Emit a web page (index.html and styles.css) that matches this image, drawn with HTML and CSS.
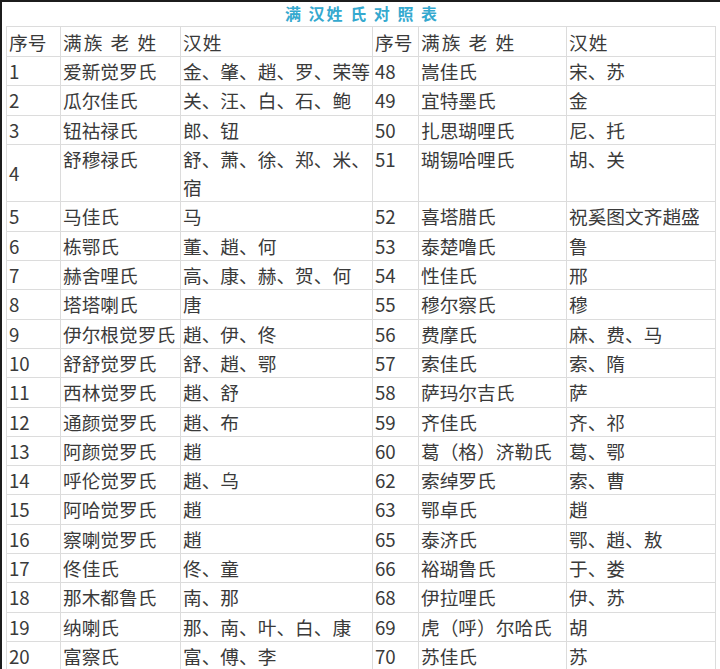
FILE: index.html
```html
<!DOCTYPE html>
<html lang="zh-CN">
<head>
<meta charset="utf-8">
<title>满汉姓氏对照表</title>
<link rel="stylesheet" href="styles.css">
</head>
<body>
<div class="frame">
  <h1 class="title">满 汉姓 氏 对 照 表</h1>
  <table class="grid">
    <colgroup>
      <col class="c-no"><col class="c-man"><col class="c-han">
      <col class="c-no2"><col class="c-man2"><col class="c-han2">
    </colgroup>
    <thead>
      <tr><th>序号</th><th class="h-man">满族 老 姓</th><th class="h-han">汉姓</th><th>序号</th><th class="h-man">满族 老 姓</th><th class="h-han">汉姓</th></tr>
    </thead>
    <tbody>
      <tr><td>1</td><td>爱新觉罗氏</td><td>金、肇、趙、罗、荣等</td><td>48</td><td>嵩佳氏</td><td>宋、苏</td></tr>
      <tr><td>2</td><td>瓜尔佳氏</td><td>关、汪、白、石、鲍</td><td>49</td><td>宜特墨氏</td><td>金</td></tr>
      <tr><td>3</td><td>钮祜禄氏</td><td>郎、钮</td><td>50</td><td>扎思瑚哩氏</td><td>尼、托</td></tr>
      <tr class="tall"><td class="mid">4</td><td>舒穆禄氏</td><td>舒、萧、徐、郑、米、宿</td><td>51</td><td>瑚锡哈哩氏</td><td>胡、关</td></tr>
      <tr><td>5</td><td>马佳氏</td><td>马</td><td>52</td><td>喜塔腊氏</td><td>祝奚图文齐趙盛</td></tr>
      <tr><td>6</td><td>栋鄂氏</td><td>董、趙、何</td><td>53</td><td>泰楚噜氏</td><td>鲁</td></tr>
      <tr><td>7</td><td>赫舍哩氏</td><td>高、康、赫、贺、何</td><td>54</td><td>性佳氏</td><td>邢</td></tr>
      <tr><td>8</td><td>塔塔喇氏</td><td>唐</td><td>55</td><td>穆尔察氏</td><td>穆</td></tr>
      <tr><td>9</td><td>伊尔根觉罗氏</td><td>趙、伊、佟</td><td>56</td><td>费摩氏</td><td>麻、费、马</td></tr>
      <tr><td>10</td><td>舒舒觉罗氏</td><td>舒、趙、鄂</td><td>57</td><td>索佳氏</td><td>索、隋</td></tr>
      <tr><td>11</td><td>西林觉罗氏</td><td>趙、舒</td><td>58</td><td>萨玛尔吉氏</td><td>萨</td></tr>
      <tr><td>12</td><td>通颜觉罗氏</td><td>趙、布</td><td>59</td><td>齐佳氏</td><td>齐、祁</td></tr>
      <tr><td>13</td><td>阿颜觉罗氏</td><td>趙</td><td>60</td><td>葛（格）济勒氏</td><td>葛、鄂</td></tr>
      <tr><td>14</td><td>呼伦觉罗氏</td><td>趙、乌</td><td>62</td><td>索绰罗氏</td><td>索、曹</td></tr>
      <tr><td>15</td><td>阿哈觉罗氏</td><td>趙</td><td>63</td><td>鄂卓氏</td><td>趙</td></tr>
      <tr><td>16</td><td>察喇觉罗氏</td><td>趙</td><td>65</td><td>泰济氏</td><td>鄂、趙、敖</td></tr>
      <tr><td>17</td><td>佟佳氏</td><td>佟、童</td><td>66</td><td>裕瑚鲁氏</td><td>于、娄</td></tr>
      <tr><td>18</td><td>那木都鲁氏</td><td>南、那</td><td>68</td><td>伊拉哩氏</td><td>伊、苏</td></tr>
      <tr><td>19</td><td>纳喇氏</td><td>那、南、叶、白、康</td><td>69</td><td>虎（呼）尔哈氏</td><td>胡</td></tr>
      <tr><td>20</td><td>富察氏</td><td>富、傅、李</td><td>70</td><td>苏佳氏</td><td>苏</td></tr>
    </tbody>
  </table>
</div>
</body>
</html>
```
FILE: styles.css
```css
html, body {
  margin: 0;
  padding: 0;
  background: #ffffff;
}
body {
  font-family: "Noto Sans CJK SC", "Noto Sans", sans-serif;
  color: #3a3a3a;
  overflow: hidden;
}
.frame {
  width: 720px;
  height: 669px;
  box-sizing: border-box;
  border-top: 2px solid #1c1c1c;
  border-left: 2px solid #1c1c1c;
  overflow: hidden;
}
.title {
  margin: 0;
  height: 24px;
  line-height: 23px;
  text-align: center;
  font-size: 16px;
  font-weight: bold;
  letter-spacing: 2px;
  color: #35a9cf;
  padding-left: 2px;
}
.grid {
  margin-left: 4px;
  border-collapse: collapse;
  table-layout: fixed;
  width: 709px;
  font-size: 18.7px;
}
.c-no { width: 54px; }
.c-man { width: 120px; }
.c-han { width: 192px; }
.c-no2 { width: 46px; }
.c-man2 { width: 148px; }
.c-han2 { width: 149px; }
.grid th,
.grid td {
  border: 1px solid #dcdcdc;
  padding: 0 0 0 2px;
  line-height: 28.3px;
  text-align: left;
  font-weight: normal;
  vertical-align: middle;
  white-space: normal;
}
.grid th {
  line-height: 29px;
}
.grid .h-man {
  letter-spacing: 2px;
}
.grid .h-han {
  letter-spacing: 1px;
}
.grid tr.tall td {
  vertical-align: top;
}
.grid tr.tall td.mid {
  vertical-align: middle;
}
```
